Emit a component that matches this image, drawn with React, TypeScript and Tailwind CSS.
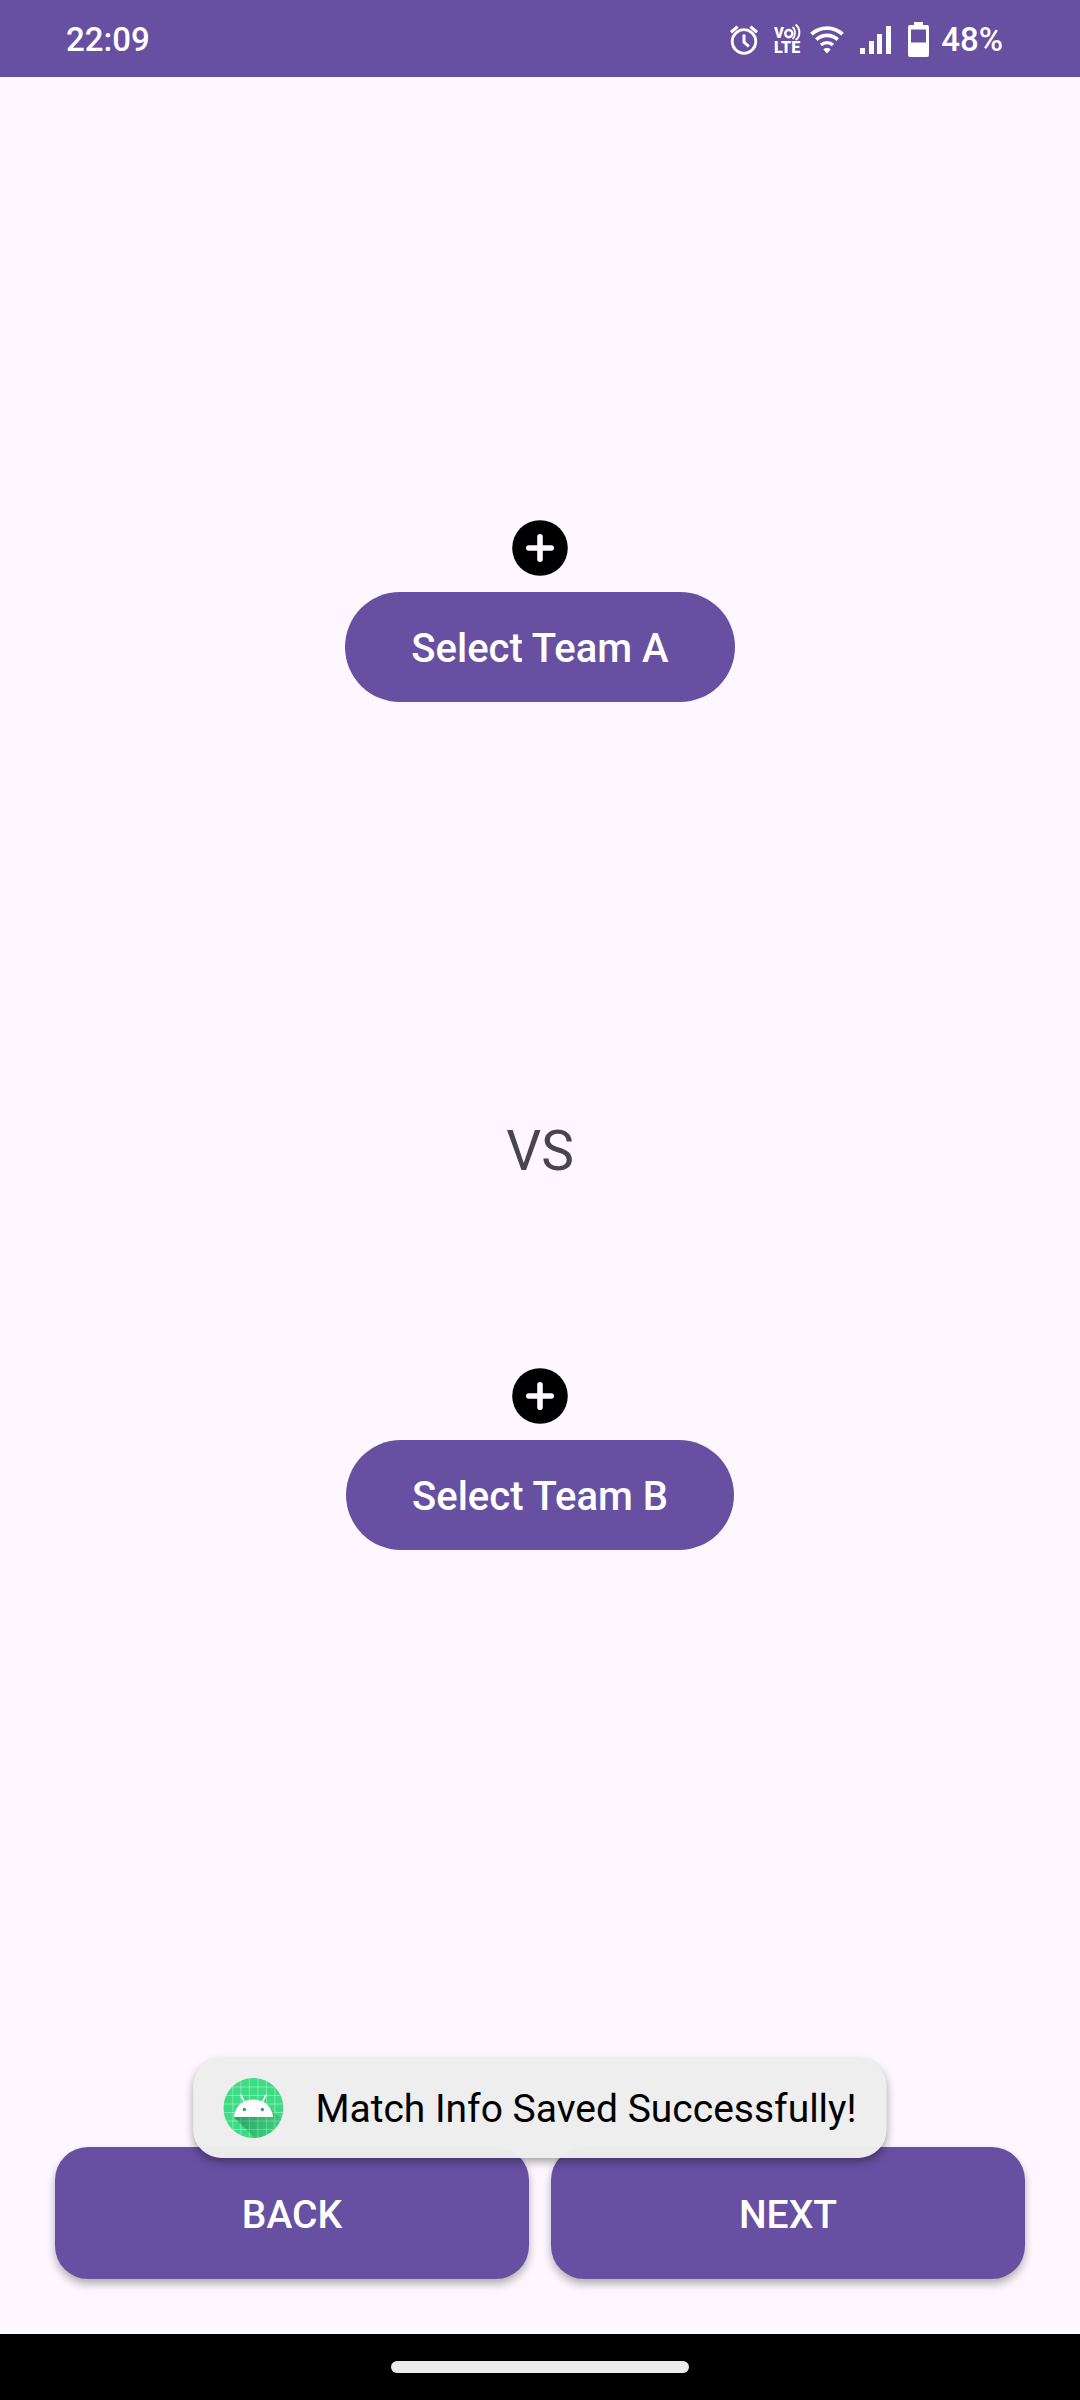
import type { ReactNode } from "react";

function AlarmIcon() {
  return (
    <svg viewBox="0 0 28 30" className="h-[30px] w-7" fill="none" stroke="#fff" aria-hidden="true">
      <circle cx="14" cy="16.5" r="11.8" strokeWidth="2.8" />
      <path d="M14 9.5v7.6l4.8 4.4" strokeWidth="3" />
      <path d="M1 7.2 7.6 1.6M27 7.2 20.4 1.6" strokeWidth="3.2" />
    </svg>
  );
}

function VolteIcon() {
  return (
    <svg viewBox="0 0 28 38" className="h-[38px] w-7" aria-hidden="true">
      <text fill="#fff" fontFamily="Roboto, sans-serif" fontWeight="900">
        <tspan x="0" y="17" fontSize="15">
          V
        </tspan>
        <tspan x="0" y="32" fontSize="16">
          LTE
        </tspan>
      </text>
      <g fill="none" stroke="#fff">
        <circle cx="14.8" cy="12.6" r="3.6" strokeWidth="2.4" />
        <path d="M18.6 6c3.2 2.6 3.2 9 0 12" strokeWidth="1.8" />
        <path d="M21.6 3.6c5 3.6 5 12 0 15.4" strokeWidth="2" />
      </g>
    </svg>
  );
}

function WifiIcon() {
  return (
    <svg viewBox="0 0 34 30" className="h-[30px] w-[34px]" fill="none" stroke="#fff" aria-hidden="true">
      <path d="M1.5 9.2C10 1 24 1 32.5 9.2" strokeWidth="3.8" />
      <path d="M6.3 14.6c6-5.6 15.4-5.6 21.4 0" strokeWidth="3.6" />
      <path d="M11 20c3.5-3.2 8.5-3.2 12 0" strokeWidth="3.4" />
      <path d="M13.4 24.4c2-1.8 5.2-1.8 7.2 0L17 28.6z" fill="#fff" stroke="none" />
    </svg>
  );
}

function SignalIcon() {
  return (
    <svg viewBox="0 0 32 30" className="h-[30px] w-8" fill="#fff" aria-hidden="true">
      <path d="M0 23h5v6H0zM9 16h5v13H9zM17 9h5v20h-5zM26 1h5v28h-5z" />
    </svg>
  );
}

function BatteryIcon() {
  return (
    <svg viewBox="0 0 21 36" className="h-9 w-[21px]" aria-hidden="true">
      <path
        fill="#fff"
        fillRule="evenodd"
        d="M6 0h9v3h4a2 2 0 0 1 2 2v28a2 2 0 0 1-2 2H2a2 2 0 0 1-2-2V5a2 2 0 0 1 2-2h4zM3 7.5v13h15v-13z"
      />
    </svg>
  );
}

function PlusIcon() {
  return (
    <svg viewBox="0 0 56 56" className="size-14" aria-hidden="true">
      <circle cx="28" cy="28" r="27.8" fill="#000" />
      <path d="M28 16.8v22.4M16.8 28h22.4" stroke="#fef7ff" strokeWidth="5.6" strokeLinecap="round" />
    </svg>
  );
}

function AndroidIcon() {
  return (
    <svg viewBox="0 0 60 60" className="size-[60px]" aria-hidden="true">
      <defs>
        <clipPath id="disc">
          <circle cx="30" cy="30" r="30" />
        </clipPath>
        <linearGradient id="shade" x1="20" y1="34" x2="50" y2="60" gradientUnits="userSpaceOnUse">
          <stop offset="0" stopColor="#000" stopOpacity="0.26" />
          <stop offset="1" stopColor="#000" stopOpacity="0.04" />
        </linearGradient>
      </defs>
      <g clipPath="url(#disc)">
        <path fill="#3ddc84" d="M0 0h60v60H0z" />
        <path
          d="M9.5 0v60M17.5 0v60M26 0v60M34.5 0v60M43 0v60M51.5 0v60M0 9h60M0 17.5h60M0 26h60M0 34.5h60M0 43h60M0 51.5h60"
          stroke="#fff"
          strokeOpacity="0.4"
          strokeWidth="0.9"
        />
        <path fill="url(#shade)" d="M10.5 39 49 39 46 30 64 46 64 64 35.5 64z" />
      </g>
      <path d="M21.5 25 17.5 17M38.5 25 42.5 17" stroke="#fff" strokeWidth="1.6" strokeLinecap="round" />
      <path fill="#fff" d="M10.5 39C11.6 28.5 19.5 21.5 30 21.5S48.6 28.5 49.7 39z" />
      <circle cx="21" cy="31.5" r="1.7" fill="#3a9c66" />
      <circle cx="39" cy="31.5" r="1.7" fill="#3a9c66" />
    </svg>
  );
}

function StatusBar() {
  return (
    <header className="flex h-[77px] shrink-0 items-center justify-between bg-[#6750a2] pt-0.5 pr-[77px] pl-[66px] text-[33px] leading-10 font-medium text-white">
      <time>22:09</time>
      <div className="flex items-center">
        <AlarmIcon />
        <span className="ml-4 flex">
          <VolteIcon />
        </span>
        <span className="ml-2 flex">
          <WifiIcon />
        </span>
        <span className="ml-4 flex">
          <SignalIcon />
        </span>
        <span className="mr-3 ml-4 flex">
          <BatteryIcon />
        </span>
        <span>48%</span>
      </div>
    </header>
  );
}

function TeamPicker({ label }: { label: string }) {
  return (
    <section className="flex shrink-0 flex-col items-center gap-4">
      <PlusIcon />
      <button
        type="button"
        className="h-[110px] rounded-full bg-[#6750a2] px-[66px] pt-1 text-[40px] leading-[46px] font-medium text-white"
      >
        {label}
      </button>
    </section>
  );
}

function NavButton({ children }: { children: ReactNode }) {
  return (
    <button
      type="button"
      className="h-[132px] flex-1 rounded-[33px] bg-[#6750a2] pt-1 text-[39px] leading-[46px] font-medium text-white shadow-[0_5px_8px_rgba(0,0,0,0.3)]"
    >
      {children}
    </button>
  );
}

function Toast({ message }: { message: string }) {
  return (
    <div
      role="status"
      className="absolute bottom-[176px] left-1/2 flex -translate-x-1/2 items-center gap-8 rounded-[28px] bg-[#eeeeee]/98 px-[30px] py-5 text-[39px] leading-[48px] whitespace-nowrap text-black shadow-[0_4px_9px_rgba(0,0,0,0.35)]"
    >
      <AndroidIcon />
      <span className="pt-0.5">{message}</span>
    </div>
  );
}

export default function App() {
  return (
    <div className="flex min-h-screen flex-col bg-[#fef7ff] font-['Roboto',sans-serif]">
      <StatusBar />
      <main className="flex grow flex-col">
        <div className="grow-[443]" />
        <TeamPicker label="Select Team A" />
        <div className="grow-[416]" />
        <p className="text-center text-[55px] leading-[66px] text-[#49454f]">VS</p>
        <div className="grow-[184]" />
        <TeamPicker label="Select Team B" />
        <div className="grow-[597]" />
        <div className="relative flex shrink-0 gap-[22px] px-[55px] pb-[55px]">
          <NavButton>BACK</NavButton>
          <NavButton>NEXT</NavButton>
          <Toast message="Match Info Saved Successfully!" />
        </div>
      </main>
      <footer className="flex h-[66px] shrink-0 items-center justify-center bg-black">
        <div className="h-3 w-[298px] rounded-full bg-[#ececec]" />
      </footer>
    </div>
  );
}
